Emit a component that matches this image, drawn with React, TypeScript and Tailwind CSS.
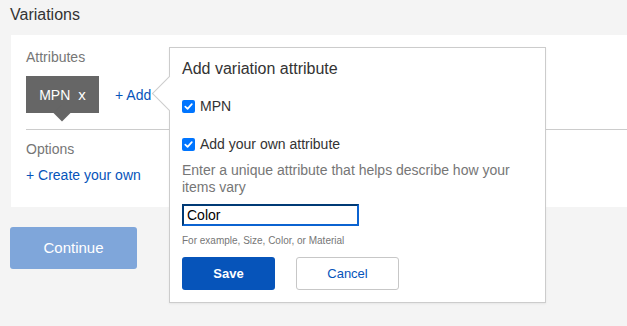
const Check = () => (
  <span className="flex h-[13px] w-[13px] items-center justify-center rounded-[2px] bg-[#0075ff]">
    <svg viewBox="0 0 12 12" className="h-[11px] w-[11px]">
      <path d="M2.5 6.2 L5 8.6 L9.6 3.4" fill="none" stroke="white" strokeWidth="1.9" strokeLinecap="round" strokeLinejoin="round" />
    </svg>
  </span>
);

const AddAttributePopover = () => (
  <div className="absolute left-[169px] top-[47px] h-[256px] w-[377px] border border-[#cccccc] bg-white pl-[12px] pt-[11px] shadow-[0_1px_2px_rgba(0,0,0,0.06)]">
    {/* pointer towards "+ Add" */}
    <div className="absolute left-[-13px] top-[33px] h-[25px] w-[25px] rotate-45 border-b border-l border-[#cccccc] bg-white" />
    <h3 className="relative text-[16px] leading-[20px] text-[#333333]">Add variation attribute</h3>

    <label className="relative mt-[19px] flex items-center gap-[5px] text-[14px] leading-[16px] text-[#333333]">
      <Check />
      MPN
    </label>
    <label className="relative mt-[22px] flex items-center gap-[5px] text-[14px] leading-[16px] text-[#333333]">
      <Check />
      Add your own attribute
    </label>

    <p className="mt-[10px] w-[340px] text-[14px] leading-[17px] text-[#767676]">
      Enter a unique attribute that helps describe how your items vary
    </p>

    <div className="mt-[8px] flex h-[22px] w-[177px] items-center border-2 border-t-[#003a75] border-l-[#003a75] border-r-[#0b63d1] border-b-[#0b63d1] px-[3px] text-[14px] text-black">
      Color
    </div>
    <p className="mt-[9px] text-[10px] leading-[12px] text-[#767676]">For example, Size, Color, or Material</p>

    <div className="mt-[10px] flex gap-[21px]">
      <button className="h-[33px] w-[93px] rounded-[3px] bg-[#0654ba] text-[13px] font-bold text-white">Save</button>
      <button className="h-[33px] w-[103px] rounded-[3px] border border-[#c7c7c7] bg-white text-[13px] text-[#0654ba]">Cancel</button>
    </div>
  </div>
);

export default function App() {
  return (
    <div className="relative h-[326px] w-[627px] overflow-hidden bg-[#f4f4f4] font-['Liberation_Sans',Arial,sans-serif]">
      <h2 className="pl-[10px] pt-[5px] text-[16px] leading-[20px] text-[#333333]">Variations</h2>

      <div className="ml-[11px] mt-[10px] h-[172px] bg-white pl-[15px] pt-[14px]">
        <div className="text-[14px] leading-[16px] text-[#767676]">Attributes</div>

        <div className="mt-[11px] flex items-start">
          <div className="relative flex h-[37px] w-[73px] items-center justify-center gap-[8px] bg-[#666666] pt-[1px] text-[14px] text-white">
            <span>MPN</span>
            <span className="text-[15px]">x</span>
            <div className="absolute left-[30px] top-[31px] h-[12px] w-[12px] rotate-45 bg-[#666666]" />
          </div>
          <a className="ml-[16px] mt-[11px] text-[14px] leading-[16px] text-[#0654ba]">+ Add</a>
        </div>

        <div className="mt-[16px] border-t border-[#cccccc]" />

        <div className="mt-[11px] text-[14px] leading-[16px] text-[#767676]">Options</div>
        <a className="mt-[10px] block text-[14px] leading-[16px] text-[#0654ba]">+ Create your own</a>
      </div>

      <button className="ml-[10px] mt-[20px] h-[42px] w-[127px] rounded-[3px] bg-[#7fa6da] text-[15px] text-white">Continue</button>

      <AddAttributePopover />
    </div>
  );
}
